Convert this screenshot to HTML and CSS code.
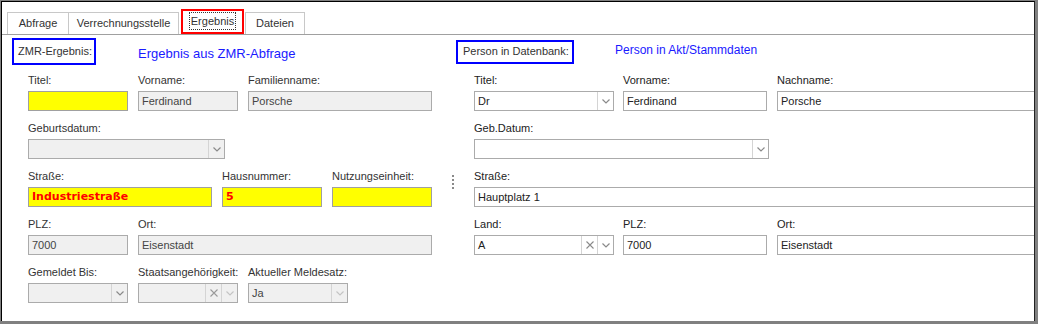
FILE: index.html
```html
<!DOCTYPE html>
<html>
<head>
  <meta charset="UTF-8">
  <title>ZMR-Ergebnis</title>
  <link rel="stylesheet" href="styles.css">
</head>
<body>
  <div class="frame">
    <div class="window">

      <div class="tabs">
        <div class="tab tab-abfrage">Abfrage</div>
        <div class="tab tab-vst">Verrechnungsstelle</div>
        <div class="tab active"><span class="focus">Ergebnis</span></div>
        <div class="tab tab-dateien">Dateien</div>
      </div>

      <div class="panel">
        <!-- ZMR result (left) -->
        <div class="col col-left">
          <div class="header header-left">
            <div class="marker marker-left">ZMR-Ergebnis:</div>
            <div class="note">Ergebnis aus ZMR-Abfrage</div>
          </div>

          <div class="fields">
            <div class="row">
              <div class="field w100"><label>Titel:</label><div class="input yellow"></div></div>
              <div class="field w100"><label>Vorname:</label><div class="input disabled">Ferdinand</div></div>
              <div class="field w184"><label>Familienname:</label><div class="input disabled">Porsche</div></div>
            </div>
            <div class="row">
              <div class="field w197">
                <label>Geburtsdatum:</label>
                <div class="combo disabled">
                  <div class="value"></div>
                  <div class="btn"><svg width="8" height="5" viewBox="0 0 8 5"><path d="M0.5 0.5 L4 4 L7.5 0.5" fill="none" stroke="#8a8a8a" stroke-width="1.2"/></svg></div>
                </div>
              </div>
            </div>
            <div class="row">
              <div class="field w184"><label>Straße:</label><div class="input yellow red">Industriestraße</div></div>
              <div class="field w100"><label>Hausnummer:</label><div class="input yellow red">5</div></div>
              <div class="field w100"><label>Nutzungseinheit:</label><div class="input yellow"></div></div>
            </div>
            <div class="row">
              <div class="field w100"><label>PLZ:</label><div class="input disabled">7000</div></div>
              <div class="field w294"><label>Ort:</label><div class="input disabled">Eisenstadt</div></div>
            </div>
            <div class="row">
              <div class="field w100">
                <label>Gemeldet Bis:</label>
                <div class="combo disabled">
                  <div class="value"></div>
                  <div class="btn"><svg width="8" height="5" viewBox="0 0 8 5"><path d="M0.5 0.5 L4 4 L7.5 0.5" fill="none" stroke="#8a8a8a" stroke-width="1.2"/></svg></div>
                </div>
              </div>
              <div class="field w100">
                <label>Staatsangehörigkeit:</label>
                <div class="combo disabled">
                  <div class="value"></div>
                  <div class="btn"><svg width="8" height="8" viewBox="0 0 8 8"><path d="M0.5 0.5 L7.5 7.5 M7.5 0.5 L0.5 7.5" fill="none" stroke="#9a9a9a" stroke-width="1.1"/></svg></div>
                  <div class="btn"><svg width="8" height="5" viewBox="0 0 8 5"><path d="M0.5 0.5 L4 4 L7.5 0.5" fill="none" stroke="#c4c4c4" stroke-width="1.2"/></svg></div>
                </div>
              </div>
              <div class="field w100">
                <label>Aktueller Meldesatz:</label>
                <div class="combo disabled">
                  <div class="value">Ja</div>
                  <div class="btn"><svg width="8" height="5" viewBox="0 0 8 5"><path d="M0.5 0.5 L4 4 L7.5 0.5" fill="none" stroke="#c4c4c4" stroke-width="1.2"/></svg></div>
                </div>
              </div>
            </div>
          </div>
        </div>

        <div class="col col-grip"><div class="grip"></div></div>

        <!-- database person (right) -->
        <div class="col col-right">
          <div class="header header-right">
            <div class="marker marker-right">Person in Datenbank:</div>
            <div class="note note-right">Person in Akt/Stammdaten</div>
          </div>

          <div class="fields">
            <div class="row row-right">
              <div class="field w140">
                <label>Titel:</label>
                <div class="combo">
                  <div class="value">Dr</div>
                  <div class="btn"><svg width="8" height="5" viewBox="0 0 8 5"><path d="M0.5 0.5 L4 4 L7.5 0.5" fill="none" stroke="#8a8a8a" stroke-width="1.2"/></svg></div>
                </div>
              </div>
              <div class="field w144"><label>Vorname:</label><div class="input">Ferdinand</div></div>
              <div class="field w270 gap-l"><label>Nachname:</label><div class="input">Porsche</div></div>
            </div>
            <div class="row">
              <div class="field w295">
                <label>Geb.Datum:</label>
                <div class="combo">
                  <div class="value"></div>
                  <div class="btn"><svg width="8" height="5" viewBox="0 0 8 5"><path d="M0.5 0.5 L4 4 L7.5 0.5" fill="none" stroke="#8a8a8a" stroke-width="1.2"/></svg></div>
                </div>
              </div>
            </div>
            <div class="row">
              <div class="field w580"><label>Straße:</label><div class="input">Hauptplatz 1</div></div>
            </div>
            <div class="row row-right">
              <div class="field w140">
                <label>Land:</label>
                <div class="combo">
                  <div class="value">A</div>
                  <div class="btn"><svg width="8" height="8" viewBox="0 0 8 8"><path d="M0.5 0.5 L7.5 7.5 M7.5 0.5 L0.5 7.5" fill="none" stroke="#8a8a8a" stroke-width="1.1"/></svg></div>
                  <div class="btn"><svg width="8" height="5" viewBox="0 0 8 5"><path d="M0.5 0.5 L4 4 L7.5 0.5" fill="none" stroke="#8a8a8a" stroke-width="1.2"/></svg></div>
                </div>
              </div>
              <div class="field w144"><label>PLZ:</label><div class="input">7000</div></div>
              <div class="field w270 gap-l"><label>Ort:</label><div class="input">Eisenstadt</div></div>
            </div>
          </div>
        </div>
      </div>

    </div>
  </div>
</body>
</html>
```

FILE: styles.css
```css
* {
  box-sizing: border-box;
}
body {
  margin: 0;
  font-family: "Liberation Sans", Arial, sans-serif;
  font-size: 11px;
  color: #333;
}
.frame {
  width: 1038px;
  height: 324px;
  background: #808080;
  padding: 1px 3px 3px 1px;
}
.window {
  height: 100%;
  background: #fff;
  border: 1px solid #000;
  border-right-color: #222;
  border-bottom: none;
  overflow: hidden;
}

/* tabs */
.tabs {
  display: flex;
  align-items: flex-end;
  height: 33px;
  padding-left: 5px;
  border-bottom: 1px solid #a0a0a0;
}
.tab {
  height: 22px;
  line-height: 20px;
  text-align: center;
  white-space: nowrap;
  border: 1px solid #c8c8c8;
  border-bottom: none;
  background: #fff;
  color: #333;
}
.tab + .tab {
  border-left: none;
}
.tab-abfrage {
  width: 62px;
}
.tab-vst {
  width: 110px;
}
.tab-dateien {
  width: 60px;
}
.tab.active {
  width: 63px;
  height: 25px;
  padding-top: 2px;
  margin: 0 1px 0 2px;
  border: 2px solid #ff0000;
  line-height: 16px;
}
.tab.active + .tab {
  border-left: 1px solid #c8c8c8;
}
.focus {
  display: inline-block;
  padding: 0 1px;
  outline: 1px dotted #333;
}

/* panel */
.panel {
  display: flex;
  padding-left: 10px;
}
.col-left {
  width: 432px;
  flex: none;
}
.col-grip {
  width: 12px;
  flex: none;
  padding: 140px 0 0 8px;
}
.grip {
  width: 2px;
  height: 14px;
  border-left: 2px dotted #8a8a8a;
}
.col-right {
  width: 600px;
  flex: none;
}

.header {
  display: flex;
  align-items: flex-start;
  height: 30px;
}
.header-left {
  padding-top: 3px;
}
.header-right {
  padding-top: 5px;
}
.marker {
  border: 2px solid #0000ff;
  line-height: 17px;
  white-space: nowrap;
}
.marker-left {
  width: 84px;
  height: 27px;
  padding: 3px 0 0 4px;
}
.marker-right {
  width: 118px;
  height: 24px;
  padding: 1px 0 0 5px;
}
.note {
  margin: 8px 0 0 42px;
  font-size: 13px;
  color: #1a1aff;
  white-space: nowrap;
}
.note-right {
  margin: 3px 0 0 41px;
  font-size: 12px;
}

/* fields */
.fields {
  padding: 8px 0 0 16px;
  display: flex;
  flex-direction: column;
  gap: 10px;
}
.col-right .fields {
  padding-left: 18px;
}
.row {
  display: flex;
  gap: 10px;
}
.row-right {
  gap: 9px;
}
.gap-l {
  margin-left: 1px;
}
.field label {
  display: block;
  line-height: 14px;
  margin-bottom: 4px;
  white-space: nowrap;
}
.col-right .field label {
  color: #222;
}
.w100 { width: 100px; }
.w140 { width: 140px; }
.w144 { width: 144px; }
.w184 { width: 184px; }
.w197 { width: 197px; }
.w270 { width: 270px; flex: none; }
.w294 { width: 294px; }
.w295 { width: 295px; }
.w580 { width: 580px; flex: none; }

.input,
.combo {
  height: 20px;
  border: 1px solid #ababab;
  background: #fff;
  line-height: 18px;
  color: #222;
}
.input {
  padding-left: 3px;
  white-space: nowrap;
  overflow: hidden;
}
.disabled {
  background: #f0f0f0;
  color: #444;
}
.yellow {
  background: #ffff00;
  border-color: #a0a0a0;
}
.red {
  font-family: "DejaVu Sans", Verdana, sans-serif;
  color: #ff0000;
  font-weight: bold;
}
.combo {
  display: flex;
}
.combo .value {
  flex: 1;
  padding-left: 3px;
}
.combo .btn {
  width: 16px;
  border-left: 1px solid #d4d4d4;
  display: flex;
  align-items: center;
  justify-content: center;
}
```
